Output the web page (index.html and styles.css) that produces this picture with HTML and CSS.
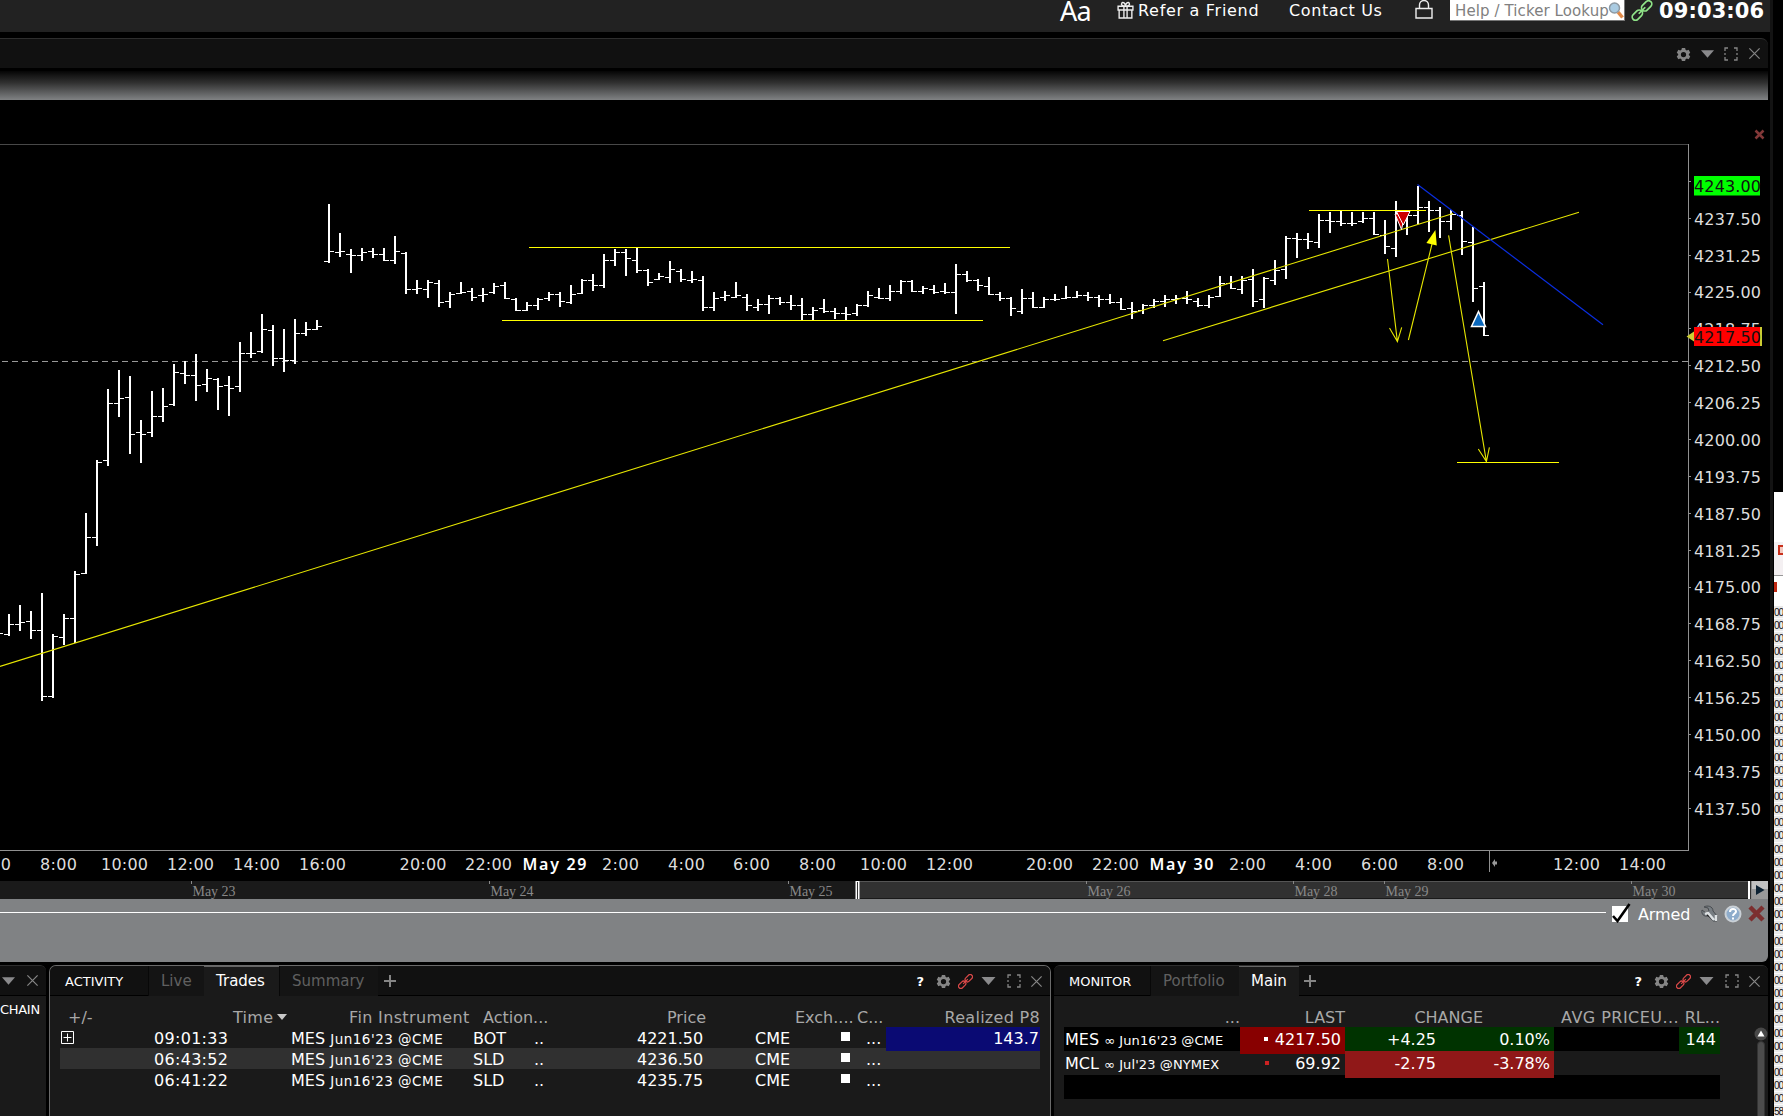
FILE: index.html
```html
<!DOCTYPE html>
<html lang="en">
<head>
  <meta charset="UTF-8">
  <title>Trader Workstation</title>
  <link rel="stylesheet" href="styles.css">
</head>
<body>
  <!-- shared icons -->
  <svg width="0" height="0" class="defs">
    <symbol id="gear" viewBox="0 0 16 16">
      <path fill="#858585" fill-rule="evenodd" d="M6.3 1h3.4l.5 2 1.3.7 2-.7 1.7 3-1.5 1.4v1.2l1.5 1.4-1.7 3-2-.7-1.3.7-.5 2H6.3l-.5-2-1.3-.7-2 .7-1.7-3 1.5-1.4V7.4L.8 6l1.7-3 2 .7L5.8 3zM8 5.200a2.800 2.800 0 1 0 0 5.600 2.800 2.800 0 0 0 0-5.600z"/>
    </symbol>
    <symbol id="tri" viewBox="0 0 14 8"><path fill="#8a8a8c" d="M0 0h14L7 8z"/></symbol>
    <symbol id="expand" viewBox="0 0 14 14">
      <path fill="none" stroke="#858585" stroke-width="1.3" d="M1 4V1h3M10 1h3v3M13 10v3h-3M4 13H1v-3M1 6v2M13 6v2"/>
    </symbol>
    <symbol id="close" viewBox="0 0 14 14">
      <path fill="none" stroke="#858585" stroke-width="1.3" d="M1.500 1.500l11 11M12.500 1.500l-11 11"/>
    </symbol>
    <symbol id="link" viewBox="0 0 16 16">
      <g fill="none" stroke="currentColor" stroke-width="1.3" transform="rotate(-45 8 8)">
        <rect x="-1.5" y="5.5" width="9" height="5" rx="2.5"/>
        <rect x="8.5" y="5.5" width="9" height="5" rx="2.5"/>
        <path d="M4.500 8h7"/>
      </g>
    </symbol>
  </svg>

  <div class="desktop">
    <main class="main">
      <header class="topbar">
        <span class="aa">Aa</span>
        <svg class="gift" width="17" height="18" viewBox="0 0 16 17">
          <path fill="none" stroke="#eee" stroke-width="1.3" d="M1 5h14v3.500H1zM2 8.500h12V16H2zM6.500 5v11M9.500 5v11M8 5C5 5 3.500 3.500 4.500 2S8 2 8 5c0-3 2.500-4.500 3.500-3S11 5 8 5"/>
        </svg>
        <span class="refer">Refer a Friend</span>
        <span class="contact">Contact Us</span>
        <svg class="lock" width="18" height="19" viewBox="0 0 18 19">
          <path fill="none" stroke="#eee" stroke-width="1.4" d="M1 8.500h16V18H1zM4.500 8.500V5a4.500 4.500 0 0 1 9 0v3.500"/>
        </svg>
        <div class="lookup">
          <span>Help / Ticker Lookup</span>
          <svg width="16" height="17" viewBox="0 0 16 17">
            <path stroke="#e08a4a" stroke-width="3.5" d="M10 10l4.500 5.500"/>
            <circle cx="6.5" cy="6" r="5" fill="#a9cbe2" stroke="#8d99a3" stroke-width="1.5"/>
          </svg>
        </div>
        <svg class="link-green" width="22" height="21"><use href="#link"/></svg>
        <span class="clock">09:03:06</span>
      </header>

      <section class="chart-window">
        <div class="window-head">
          <svg width="15" height="15"><use href="#gear"/></svg>
          <svg width="13" height="8"><use href="#tri"/></svg>
          <svg width="14" height="14"><use href="#expand"/></svg>
          <svg width="13" height="13"><use href="#close"/></svg>
        </div>
        <div class="shade"></div>
        <!-- viewBox keeps window coordinates, y starts at 100 -->
        <svg id="chart" width="1768" height="781" viewBox="0 100 1768 781"></svg>
        <svg id="range" width="1768" height="18" viewBox="0 0 1768 18"></svg>
        <div class="order-bar">
          <div class="order-line"></div>
          <svg class="check" width="20" height="20" viewBox="0 0 20 20">
            <path fill="#fff" d="M0 3h16v16H0z"/>
            <path fill="none" stroke="#000" stroke-width="2.6" d="M1 13l4.500 5L17.500 1"/>
          </svg>
          <span class="armed">Armed</span>
          <svg class="tool" width="17" height="17" viewBox="0 0 17 17">
            <path fill="#777d82" stroke="#484c50" d="M3 2c3-2 9-1 9 4l4 5v5h-4L7 11C3 12 0 9 1 5l4 3 3-2-1-3z"/>
            <path stroke="#dde1e3" stroke-width="2.5" d="M4 9l3-1 6 7M15 10v6"/>
          </svg>
          <svg class="tool" width="18" height="18" viewBox="0 0 18 18">
            <circle cx="9" cy="9" r="7.5" fill="#8eaccb" stroke="#c9d0d6" stroke-width="2"/>
            <path fill="none" stroke="#fff" stroke-width="2" d="M6 7c0-4 6-4 6-.5 0 2-3 2-3 4.500M9 12.500v2"/>
          </svg>
          <svg width="17" height="17" viewBox="0 0 17 17">
            <path stroke="#7c2f2f" stroke-width="4.5" d="M2 2l13 13M15 2L2 15"/>
          </svg>
        </div>
      </section>

      <div class="panels">
        <section class="panel chain">
          <div class="panel-head">
            <svg class="tri" width="13" height="8"><use href="#tri"/></svg>
            <svg width="13" height="13"><use href="#close"/></svg>
          </div>
          <div class="chain-label">CHAIN</div>
        </section>

        <section class="panel activity">
          <div class="panel-head">
            <span class="title">ACTIVITY</span>
            <span class="tab live">Live</span>
            <span class="tab active trades">Trades</span>
            <span class="tab summary">Summary</span>
            <svg class="plus" width="12" height="12"><path stroke="#858585" stroke-width="2" d="M6 0v12M0 6h12"/></svg>
            <div class="tools">
              <b>?</b>
              <svg width="15" height="15"><use href="#gear"/></svg>
              <svg class="link-red" width="15" height="15"><use href="#link"/></svg>
              <svg width="15" height="8"><use href="#tri"/></svg>
              <svg width="14" height="14"><use href="#expand"/></svg>
              <svg width="13" height="13"><use href="#close"/></svg>
            </div>
          </div>
          <div class="trades-table">
            <div class="row head">
              <span class="pm">+/-</span>
              <span class="time">Time<i class="sort"></i></span>
              <span class="fin">Fin Instrument</span>
              <span class="action">Action...</span>
              <span class="price">Price</span>
              <span class="exch">Exch....</span>
              <span class="c">C...</span>
              <span class="pl">Realized P8</span>
            </div>
            <div class="row">
              <span class="pm"><svg width="13" height="13"><path fill="none" stroke="#fff" d="M.5.5h12v12H.5zM6.500 2.500v8M2.500 6.500h8"/></svg></span>
              <span class="time">09:01:33</span>
              <span class="fin">MES <small>Jun16'23 @CME</small></span>
              <span class="action">BOT</span><span class="dots">..</span>
              <span class="price">4221.50</span>
              <span class="exch">CME</span>
              <span class="box"></span><span class="c">...</span>
              <span class="pl profit">143.7</span>
            </div>
            <div class="row alt">
              <span class="pm"></span>
              <span class="time">06:43:52</span>
              <span class="fin">MES <small>Jun16'23 @CME</small></span>
              <span class="action">SLD</span><span class="dots">..</span>
              <span class="price">4236.50</span>
              <span class="exch">CME</span>
              <span class="box"></span><span class="c">...</span>
              <span class="pl"></span>
            </div>
            <div class="row">
              <span class="pm"></span>
              <span class="time">06:41:22</span>
              <span class="fin">MES <small>Jun16'23 @CME</small></span>
              <span class="action">SLD</span><span class="dots">..</span>
              <span class="price">4235.75</span>
              <span class="exch">CME</span>
              <span class="box"></span><span class="c">...</span>
              <span class="pl"></span>
            </div>
          </div>
        </section>

        <section class="panel monitor">
          <div class="panel-head">
            <span class="title">MONITOR</span>
            <span class="tab portfolio">Portfolio</span>
            <span class="tab active main-tab">Main</span>
            <svg class="plus" width="12" height="12"><path stroke="#858585" stroke-width="2" d="M6 0v12M0 6h12"/></svg>
            <div class="tools">
              <b>?</b>
              <svg width="15" height="15"><use href="#gear"/></svg>
              <svg class="link-red" width="15" height="15"><use href="#link"/></svg>
              <svg width="15" height="8"><use href="#tri"/></svg>
              <svg width="14" height="14"><use href="#expand"/></svg>
              <svg width="13" height="13"><use href="#close"/></svg>
            </div>
          </div>
          <div class="monitor-body">
            <div class="monitor-table">
              <div class="mrow mhead">
                <span>...</span><span>LAST</span><span class="chg">CHANGE</span><span class="avg">AVG PRICEU...</span><span>RL...</span>
              </div>
              <div class="mrow dark">
                <span class="name">MES <small>∞ Jun16'23 @CME</small></span>
                <span class="last down"><i></i>4217.50</span>
                <span class="up">+4.25</span><span class="up pct">0.10%</span>
                <span></span><span class="up">144</span>
              </div>
              <div class="mrow">
                <span class="name">MCL <small>∞ Jul'23 @NYMEX</small></span>
                <span class="last"><i class="red"></i>69.92</span>
                <span class="fall">-2.75</span><span class="fall pct">-3.78%</span>
                <span></span><span></span>
              </div>
              <div class="mrow dark"></div>
            </div>
            <div class="scroll">
              <svg width="14" height="14"><circle cx="7" cy="7" r="6.5" fill="#484848"/><path fill="#fff" d="M7 3.500l3.500 6h-7z"/></svg>
              <div class="thumb"></div>
            </div>
          </div>
        </section>
      </div>
    </main>

    <aside class="edge">
      <div class="edge-line"></div>
      <div class="sheet">
        <div class="sheet-top"></div>
        <div class="sheet-tools"><i></i></div>
        <div class="sheet-tab"><i></i></div>
        <div id="cells"></div>
      </div>
    </aside>
  </div>
  <script src="chart.js"></script>
</body>
</html>
```
FILE: styles.css
```css
body {
  margin: 0;
  background: #000;
  color: #fff;
  font-family: "DejaVu Sans", Verdana, sans-serif;
  font-size: 16px;
  overflow: hidden;
}

svg {
  display: block;
  flex: none;
}

.defs {
  position: absolute;
}

.desktop {
  display: flex;
  width: 1783px;
  height: 1116px;
}

.main {
  width: 1770px;
  flex: none;
}

/* top bar */
.topbar {
  display: flex;
  height: 32px;
  background: #222;
  white-space: nowrap;
}

.topbar span {
  line-height: 22px;
}

.topbar .aa {
  width: 57px;
  height: 26px;
  margin-left: 1060px;
  font: 27px/21px "Noto Sans", sans-serif;
  letter-spacing: -0.7px;
}

.gift {
  margin: 1px 4px 0 0;
}

.refer {
  width: 151px;
  letter-spacing: 0.7px;
}

.contact {
  width: 126px;
  letter-spacing: 0.6px;
}

.lock {
  margin-right: 17px;
}

.lookup {
  display: flex;
  width: 169px;
  height: 20px;
  padding-left: 5px;
  background: #fff;
  border-right: 1px solid #777;
  border-bottom: 1px solid #777;
  color: #808080;
}

.lookup span {
  width: 153px;
  font-size: 15px;
  letter-spacing: 0.1px;
}

.lookup svg {
  margin-top: 2px;
}

.link-green {
  margin: 0 6px;
  color: #8fe388;
}

.topbar .clock {
  font-size: 21px;
  font-weight: bold;
  line-height: 23px;
  letter-spacing: 0.1px;
}

/* chart window */
.chart-window {
  width: 1768px;
  padding-top: 6px;
  background: #000;
}

.window-head {
  display: flex;
  align-items: center;
  height: 29px;
  background: #111;
  border-top: 1px solid #2e2e2e;
  border-radius: 0 7px 0 0;
}

.window-head svg:nth-child(1) { margin: 2px 0 0 1676px; }
.window-head svg:nth-child(2) { margin-left: 10px; }
.window-head svg:nth-child(3) { margin-left: 10px; }
.window-head svg:nth-child(4) { margin-left: 10px; }

.shade {
  height: 29px;
  margin-top: 3px;
  background: linear-gradient(#050505, #303030 40%, #808284);
}

#chart text {
  fill: #ddd;
  font-size: 16px;
}

#chart .bold {
  fill: #fff;
  font-family: "Noto Sans", sans-serif;
  font-weight: 600;
}

#chart .tag {
  fill: #111;
}

#range text {
  fill: #888;
  font: 14px "Liberation Serif", serif;
}

.order-bar {
  display: flex;
  height: 63px;
  background: #808284;
  border-bottom-right-radius: 6px;
}

.order-line {
  width: 1606px;
  height: 1px;
  margin: 13px 6px 0 0;
  background: #fff;
}

.check {
  margin: 4px 6px 0 0;
}

.armed {
  width: 63px;
  margin-top: 5px;
  line-height: 22px;
  letter-spacing: -0.1px;
}

.order-bar > svg:nth-child(n+4) {
  margin-top: 6px;
}

.tool {
  margin-right: 6px;
}

/* bottom panels */
.panels {
  display: flex;
  height: 151px;
  padding-top: 3px;
}

.panel {
  background: #1a1a1a;
  border-top: 1px solid #2e2e2e;
  overflow: hidden;
}

.panel-head {
  display: flex;
  height: 29px;
  background: #111;
  border-bottom: 1px solid #000;
  line-height: 31px;
  white-space: nowrap;
}

.chain {
  width: 46px;
  border-radius: 0 6px 0 0;
}

.chain .panel-head svg {
  margin: 8px 10px 0 0;
}

.chain .panel-head .tri {
  margin: 11px 11px 0 2px;
}

.chain-label {
  font-size: 13px;
  line-height: 28px;
  letter-spacing: -0.3px;
}

.activity {
  width: 1002px;
  margin-left: 3px;
  border: 1px solid #6a6a6a;
  border-bottom: 0;
  border-radius: 7px 7px 0 0;
  box-sizing: border-box;
}

.title {
  font-size: 13px;
  width: 83px;
  padding-left: 15px;
}

.tab {
  box-sizing: border-box;
  height: 30px;
  color: #606060;
  background: #141414;
  border-left: 1px solid #080808;
  padding-left: 12px;
  font-size: 15px;
}

.tab.active {
  color: #fff;
  background: #1a1a1a;
  border-left: 0;
  border-top: 1px solid #666;
  line-height: 29px;
  padding-left: 12px;
}

.live { width: 56px; }
.trades { width: 75px; }
.summary { width: 99px; }

.plus {
  margin: 9px 0 0 6px;
}

.tools {
  display: flex;
  align-items: center;
  margin-left: auto;
  padding-right: 7px;
  height: 30px;
}

.tools b {
  font-size: 13px;
  margin-right: 12px;
}

.tools svg:nth-child(2) { margin-right: 7px; }
.tools svg:nth-child(3) { margin-right: 8px; }
.tools svg:nth-child(4) { margin-right: 11px; }
.tools svg:nth-child(5) { margin-right: 9px; }

.link-red {
  color: #d84848;
}

.trades-table {
  margin: 10px 0 0 10px;
  width: 980px;
}

.row {
  display: grid;
  grid-template-columns: 94px 138px 181px 62px 102px 66px 53px 85px 25px 20px 154px;
  height: 21px;
  line-height: 23px;
  white-space: nowrap;
}

.row.alt {
  background: #303030;
}

.row.head {
  color: #a8a8a8;
  line-height: 23px;
}

.pm { grid-column: 1; }
.pm svg { margin: 4px 0 0 1px; }
.head .pm { padding-left: 8px; }
.time { grid-column: 2; letter-spacing: 0.3px; }
.head .time { padding-left: 79px; }
.fin { grid-column: 3; margin-left: -1px; }
.head .fin { padding-left: 58px; letter-spacing: 0.35px; }
.fin small { font-size: 13.5px; letter-spacing: 0.5px; }
.action { grid-column: 4; }
.head .action { padding-left: 10px; }
.dots { grid-column: 5; margin-left: -1px; }
.price { grid-column: 6; }
.head .price { padding-left: 30px; }
.exch { grid-column: 8; margin-left: -54px; padding-left: 53px; }
.head .exch { margin-left: 0; padding-left: 39px; }
.box {
  grid-column: 9;
  width: 9px;
  height: 9px;
  margin: 5px 0 0 0;
  background: #fff;
}
.c { grid-column: 10; }
.head .c { margin-left: -9px; }
.pl { grid-column: 11; text-align: right; }
.head .pl { letter-spacing: 0.3px; }

.sort {
  display: inline-block;
  margin: 0 0 3px 4px;
  border: 5.5px solid transparent;
  border-top: 6px solid #c8c8c8;
  border-bottom: 0;
}

.profit {
  background: #0a0a73;
  padding-right: 1px;
}

/* monitor */
.monitor {
  width: 714px;
  margin-left: 3px;
  border-radius: 6px 6px 0 0;
}

.monitor .title { width: 81px; }
.portfolio { width: 89px; }
.main-tab { width: 60px; }
.monitor .plus { margin-left: 5px; }

.monitor-body {
  display: flex;
}

.monitor-table {
  width: 656px;
  margin: 10px 34px 0 10px;
}

.mrow {
  display: grid;
  grid-template-columns: 176px 105px 95px 114px 125px 41px;
  height: 24px;
  line-height: 26px;
  text-align: right;
  white-space: nowrap;
}

.mrow.mhead {
  height: 21px;
  line-height: 23px;
  color: #a8a8a8;
}

.mrow.dark {
  background: #000;
}

.mrow:not(.mhead) span {
  padding-right: 4px;
}

.mrow .chg {
  grid-column: span 2;
  padding-right: 71px;
}

.mrow .avg {
  margin-left: -20px;
  letter-spacing: 0.45px;
}

.mrow .name {
  text-align: left;
  padding-left: 1px;
}

.name small {
  font-size: 13px;
  letter-spacing: 0.1px;
}

.last i {
  display: inline-block;
  width: 4px;
  height: 4px;
  margin: 0 7px 4px 0;
  background: #fff;
}

.last i.red {
  margin-right: 26px;
  background: #c22;
}

.down { background: #880000; }
.up { background: #003300; }
.fall { background: #901818; }

.scroll {
  margin-top: 31px;
}

.thumb {
  width: 6px;
  height: 80px;
  margin: 0 3px;
  background: #4c4c4c;
  border: 1px solid #333;
  border-radius: 4px 4px 0 0;
}

/* neighbouring window at the right edge */
.edge {
  display: flex;
  width: 13px;
}

.edge-line {
  width: 3px;
  margin-right: 1px;
  background: #131313;
}

.sheet {
  width: 9px;
  height: 624px;
  margin-top: 492px;
  background: #e9e9e9;
  overflow: hidden;
}

.sheet-top {
  height: 50px;
  background: #fff;
}

.sheet-tools {
  height: 34px;
  padding-top: 3px;
  box-sizing: border-box;
  background: #f4f0f2;
  border-bottom: 1px solid #999;
}

.sheet-tools i {
  display: block;
  width: 5px;
  height: 6px;
  margin-left: 4px;
  background: #f3c9c0;
  border: 2px solid #c9301c;
}

.sheet-tab {
  height: 30px;
  padding-top: 6px;
  box-sizing: border-box;
  background: #fff;
}

.sheet-tab i {
  display: block;
  width: 3px;
  height: 10px;
  background: #c02a14;
}

.cell {
  height: 13.15px;
  box-sizing: border-box;
  border-bottom: 1px solid #fafafa;
  color: #111;
  font: 10px/13px "Liberation Sans", sans-serif;
  letter-spacing: -1px;
}
```
FILE: chart.js
```js
// one entry per bar: x, open, high, low, close
var bars = [
  [-2,633,625,640,633],[9,634,614,636,624],[20,624,605,631,622],[31,621,611,639,630],[42,630,593,701,696],
  [53,696,634,698,636],[64,637,614,645,618],[75,618,571,643,574],[86,573,513,574,537],[97,537,460,546,462],
  [108,460,389,466,403],[119,403,370,417,398],[130,397,376,454,434],[141,432,420,463,434],[152,432,391,437,416],
  [163,416,388,422,406],[174,404,364,406,372],[185,373,361,384,375],[196,375,354,401,385],[207,384,369,392,378],
  [218,379,378,410,386],[229,385,376,416,388],[240,386,342,392,353],[251,353,332,358,353],[262,351,314,353,329],
  [273,330,325,366,358],[284,358,329,372,360],[295,360,319,364,333],[306,333,322,336,329],[317,329,320,330,326],
  [329,261,204,263,251],[340,252,233,257,251],[351,254,249,273,255],[362,255,248,261,252],[373,251,248,258,254],
  [384,254,248,261,260],[395,260,236,264,251],[406,253,252,294,289],[417,289,280,294,288],[428,289,280,298,282],
  [439,283,280,307,302],[450,301,292,308,294],[461,293,282,294,292],[472,291,288,301,297],[483,295,288,302,294],
  [494,292,283,294,286],[505,285,282,299,298],[516,299,298,311,310],[527,310,302,311,305],[538,305,298,310,299],
  [549,298,292,301,294],[560,294,292,307,301],[571,302,285,304,294],[582,293,279,294,280],[593,280,274,291,285],
  [604,285,254,288,260],[615,260,249,266,252],[626,252,249,276,258],[637,260,248,273,270],[648,270,269,286,282],
  [659,279,273,280,276],[670,277,261,283,269],[681,271,269,282,279],[692,280,271,283,279],[703,280,276,311,307],
  [714,307,292,311,298],[725,297,291,301,295],[736,297,282,298,295],[747,297,294,311,305],[758,307,299,311,304],
  [769,304,295,314,298],[780,298,297,305,302],[791,302,295,310,305],[802,305,298,320,314],[813,314,307,320,310],
  [824,308,299,313,311],[835,311,308,319,313],[846,313,307,320,314],[857,313,304,316,305],[868,305,291,307,295],
  [879,297,288,299,298],[890,298,285,301,291],[901,291,280,294,281],[912,281,280,292,291],[923,291,286,294,288],
  [934,289,285,294,292],[945,291,283,294,292],[956,292,264,314,274],[967,274,271,282,280],[978,280,279,291,285],
  [989,286,277,295,294],[1000,294,292,301,298],[1011,298,297,316,308],[1022,311,289,314,298],[1033,298,292,308,307],
  [1044,307,297,308,299],[1055,299,294,301,299],[1066,298,286,299,297],[1077,297,291,298,295],[1088,295,292,301,297],
  [1099,297,295,307,299],[1110,299,294,304,302],[1121,302,298,310,309],[1132,308,302,319,311],[1143,310,304,314,305],
  [1154,305,299,308,301],[1165,301,295,307,299],[1176,299,295,304,298],[1187,298,291,304,299],[1198,301,298,307,305],
  [1209,305,295,308,297],[1220,296,276,297,283],[1231,283,276,289,288],[1242,289,276,294,280],[1253,279,269,307,301],
  [1264,299,277,308,278],[1275,280,260,285,270],[1286,269,236,279,238],[1297,238,233,258,239],[1308,239,233,249,241],
  [1319,242,214,248,220],[1330,220,212,233,221],[1341,221,211,226,223],[1352,223,212,226,223],[1363,221,212,223,218],
  [1374,218,212,235,234],[1385,235,220,254,246],[1396,248,201,257,214],[1407,215,211,235,215],[1418,215,186,224,207],
  [1429,207,201,232,210],[1440,210,207,238,221],[1451,221,210,230,214],[1462,215,211,255,241],[1473,242,227,302,288],
  [1484,286,282,336,335]
];

var prices = [
  ['4243.75', 181], ['4237.50', 218], ['4231.25', 255], ['4225.00', 292], ['4218.75', 328], ['4212.50', 365],
  ['4206.25', 402], ['4200.00', 439], ['4193.75', 476], ['4187.50', 513], ['4181.25', 550], ['4175.00', 587],
  ['4168.75', 623], ['4162.50', 660], ['4156.25', 697], ['4150.00', 734], ['4143.75', 771], ['4137.50', 808]
];

var times = [
  ['6:00', -8], ['8:00', 58], ['10:00', 124], ['12:00', 190], ['14:00', 256], ['16:00', 322], ['20:00', 422.5],
  ['22:00', 488], ['May 29', 554], ['2:00', 620], ['4:00', 686], ['6:00', 751], ['8:00', 817], ['10:00', 883],
  ['12:00', 949], ['20:00', 1049], ['22:00', 1115], ['May 30', 1181], ['2:00', 1247], ['4:00', 1313],
  ['6:00', 1379], ['8:00', 1445], ['12:00', 1576], ['14:00', 1642]
];

var out = '';

// frame and last close level
out += '<g shape-rendering="crispEdges">';
out += '<path stroke="#484848" d="M0 144.5H1689"/><path stroke="#909090" d="M1688.5 144V850.5M0 850.5H1689M1489.5 850V872"/>';
out += '<path stroke="#999" stroke-dasharray="6 4" d="M2 361.5H1688"/>';

// price bars
bars.forEach(function (b) {
  out += '<path fill="#fff" d="M' + (b[0] - 1) + ' ' + b[2] + 'h2V' + b[3] + 'h-2z' +
    'M' + (b[0] - 5) + ' ' + b[1] + 'h5v1h-5zM' + b[0] + ' ' + b[4] + 'h5v1h-5z"/>';
});
out += '<path fill="#ff0" d="M529 247h481v1h-481zM502 320h481v1h-481zM1309 210h117v1h-117zM1457 462h102v1h-102z"/>';
out += '</g>';

// trend lines and arrows
out += '<path fill="none" stroke="#e6e600" stroke-width="1.1" d="M0 666.4L1453 213.5M1163 340.7L1579 212.3' +
  'M1387.5 259L1397.4 341.6M1389.5 328L1397.4 341.6L1401.7 327.3M1408.4 340L1433 240' +
  'M1448.6 235.3L1486.4 461.6M1478.3 449L1486.4 461.6L1489.4 447.3"/>';
out += '<path fill="#ff0" d="M1435.4 230L1426.4 243L1436.8 245.6z"/>';
out += '<path stroke="#0a2ee0" stroke-width="1.2" d="M1417.5 184.5L1603 324.7"/>';

// fills
out += '<path fill="#c00" stroke="#fff" d="M1395 214h10l-3.5 15.5z"/><path fill="#c00" stroke="#fff" d="M1396.500 211.500h13.500l-6.700 13.500z"/>';
out += '<path fill="#0a68bd" stroke="#fff" stroke-width="1.5" d="M1478.500 311.500l7 15h-14z"/>';

// price axis, labels snap to whole pixels
prices.forEach(function (p) {
  var base = p[1] + (p[1] === 292 || p[1] === 587 ? 6 : 7);
  out += '<path stroke="#909090" d="M1689 ' + (p[1] + 0.5) + 'h2"/>';
  out += '<text x="1694" y="' + base + '" textLength="67">' + p[0] + '</text>';
});
out += '<path fill="#0f0" d="M1694 176h66v19.500h-66z"/><text class="tag" x="1694" y="192" textLength="67">4243.00</text>';
out += '<path fill="#cc3" d="M1686.500 336.500l7.500-5V327h68v19h-68v-4.500z"/><path fill="#f00" d="M1694 327h66v19h-66z"/>';
out += '<text class="tag" x="1694" y="343" textLength="67">4217.50</text>';

// time axis
times.forEach(function (t) {
  var bold = t[0].indexOf('May') === 0;
  out += '<text text-anchor="middle"' + (bold ? ' class="bold"' : '') + ' x="' + (t[1] + 0.5) + '" y="870" textLength="' +
    (bold ? 64 : t[0].length === 5 ? 47 : 37) + '">' + t[0] + '</text>';
});
out += '<path fill="#999" d="M1492 863l3-4v2.500h2v3h-2v2.500z"/>';
out += '<path stroke="#823838" stroke-width="2.5" d="M1755.500 130.500l8 8M1763.500 130.500l-8 8"/>';
document.getElementById('chart').innerHTML = out;

// range slider
var days = [['May 23', 191], ['May 24', 489], ['May 25', 788], ['May 26', 1086], ['May 28', 1293], ['May 29', 1384], ['May 30', 1631]];
var r = '<path fill="#1a1a1a" d="M0 0h1768v18H0z"/><path fill="#313131" d="M858 1h890v16H858z"/><path fill="#555" d="M858 0h890v1H858z"/>';
days.forEach(function (d) {
  r += '<path stroke="#888" d="M' + (d[1] + 0.5) + ' 0v3"/><text x="' + (d[1] + 1.5) + '" y="15" textLength="43">' + d[0] + '</text>';
});
r += '<path fill="#fff" d="M855.500 0h4v18h-4zM1748 0h3.500v18h-3.500z"/><path fill="#333" d="M857 1h1v17h-1zM1750 0h1v18h-1z"/>';
r += '<path fill="#999" d="M1752 0h16v18h-16z"/><path fill="#c2c2c2" d="M1752 0h16v8h-16z"/><path fill="#0d2233" d="M1756 4l8.500 5-8.500 5z"/>';
document.getElementById('range').innerHTML = r;

// spreadsheet cells peeking in on the right
var cells = '';
for (var i = 0; i < 39; i++) {
  cells += '<div class="cell">' + (i === 38 ? '58' : '00') + '</div>';
}
document.getElementById('cells').innerHTML = cells;
```
